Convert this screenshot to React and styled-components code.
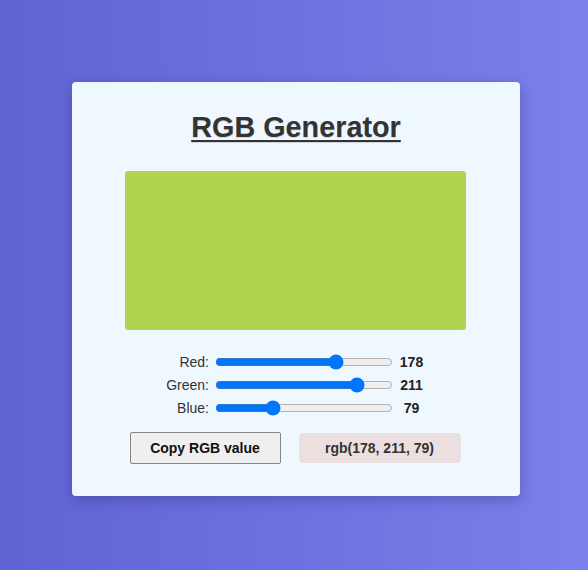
import React, { useState } from "react";
import styled, { createGlobalStyle } from "styled-components";

const GlobalStyle = createGlobalStyle`
  html, body { margin: 0; padding: 0; }
  body {
    min-height: 570px;
    background: linear-gradient(to right, #6063d4, #7b80eb);
    font-family: "Liberation Sans", Arial, sans-serif;
  }
`;

const Page = styled.div`
  display: flex;
  justify-content: center;
  padding-top: 82px;
  padding-left: 4px;
  min-height: 570px;
  box-sizing: border-box;
`;

const Card = styled.div`
  width: 448px;
  height: 414px;
  box-sizing: border-box;
  background: #f0f8ff;
  border-radius: 4px;
  box-shadow: 0 4px 14px rgba(40, 40, 110, 0.35);
  display: flex;
  flex-direction: column;
  align-items: center;
  padding-top: 29px;
`;

const Title = styled.h1`
  margin: 0;
  font-size: 28.8px;
  font-weight: bold;
  color: #333;
  text-decoration: underline;
  text-decoration-thickness: 2px;
  text-underline-offset: 3px;
  line-height: 32px;
  text-shadow: 0 1px 1px rgba(0, 0, 0, 0.15);
`;

const Swatch = styled.div`
  width: 341px;
  height: 159px;
  margin-top: 28px;
  margin-right: 2px;
  border-radius: 3px;
  background: ${(p) => p.$color};
`;

const Sliders = styled.div`
  margin-top: 22px;
  align-self: flex-start;
  margin-left: 88px;
  display: grid;
  grid-template-columns: 55px 178px 34px;
  align-items: center;
  row-gap: 3px;
`;

const Label = styled.label`
  font-size: 14px;
  color: #333;
  text-align: right;
  padding-right: 6px;
`;

const Range = styled.input`
  width: 178px;
  height: 20px;
  margin: 0;
`;

const Value = styled.span`
  font-size: 14px;
  font-weight: bold;
  color: #222;
  text-align: center;
  padding-left: 3px;
`;

const Actions = styled.div`
  margin-top: 14px;
  margin-right: 2px;
  display: flex;
  gap: 18px;
  align-items: center;
`;

const CopyButton = styled.button`
  width: 151px;
  height: 32px;
  box-sizing: border-box;
  background: #efefef;
  border: 1px solid #858585;
  border-radius: 2px;
  font-family: "Liberation Sans", Arial, sans-serif;
  font-size: 14px;
  font-weight: bold;
  color: #111;
  cursor: pointer;
  padding: 0;
`;

const Output = styled.div`
  width: 162px;
  height: 30px;
  box-sizing: border-box;
  background: #ebe0df;
  border-radius: 3px;
  display: flex;
  align-items: center;
  justify-content: center;
  font-size: 14px;
  font-weight: bold;
  color: #333;
`;

export default function App() {
  const [rgb, setRgb] = useState({ r: 178, g: 211, b: 79 });
  const channels = [
    { key: "r", label: "Red:" },
    { key: "g", label: "Green:" },
    { key: "b", label: "Blue:" },
  ];
  const value = `rgb(${rgb.r}, ${rgb.g}, ${rgb.b})`;
  return (
    <>
      <GlobalStyle />
      <Page>
        <Card>
          <Title>RGB Generator</Title>
          <Swatch $color={value} />
          <Sliders>
            {channels.map((c) => (
              <React.Fragment key={c.key}>
                <Label>{c.label}</Label>
                <Range
                  type="range"
                  min="0"
                  max="255"
                  value={rgb[c.key]}
                  onChange={(e) => setRgb({ ...rgb, [c.key]: Number(e.target.value) })}
                />
                <Value>{rgb[c.key]}</Value>
              </React.Fragment>
            ))}
          </Sliders>
          <Actions>
            <CopyButton onClick={() => navigator.clipboard && navigator.clipboard.writeText(value)}>
              Copy RGB value
            </CopyButton>
            <Output>{value}</Output>
          </Actions>
        </Card>
      </Page>
    </>
  );
}
